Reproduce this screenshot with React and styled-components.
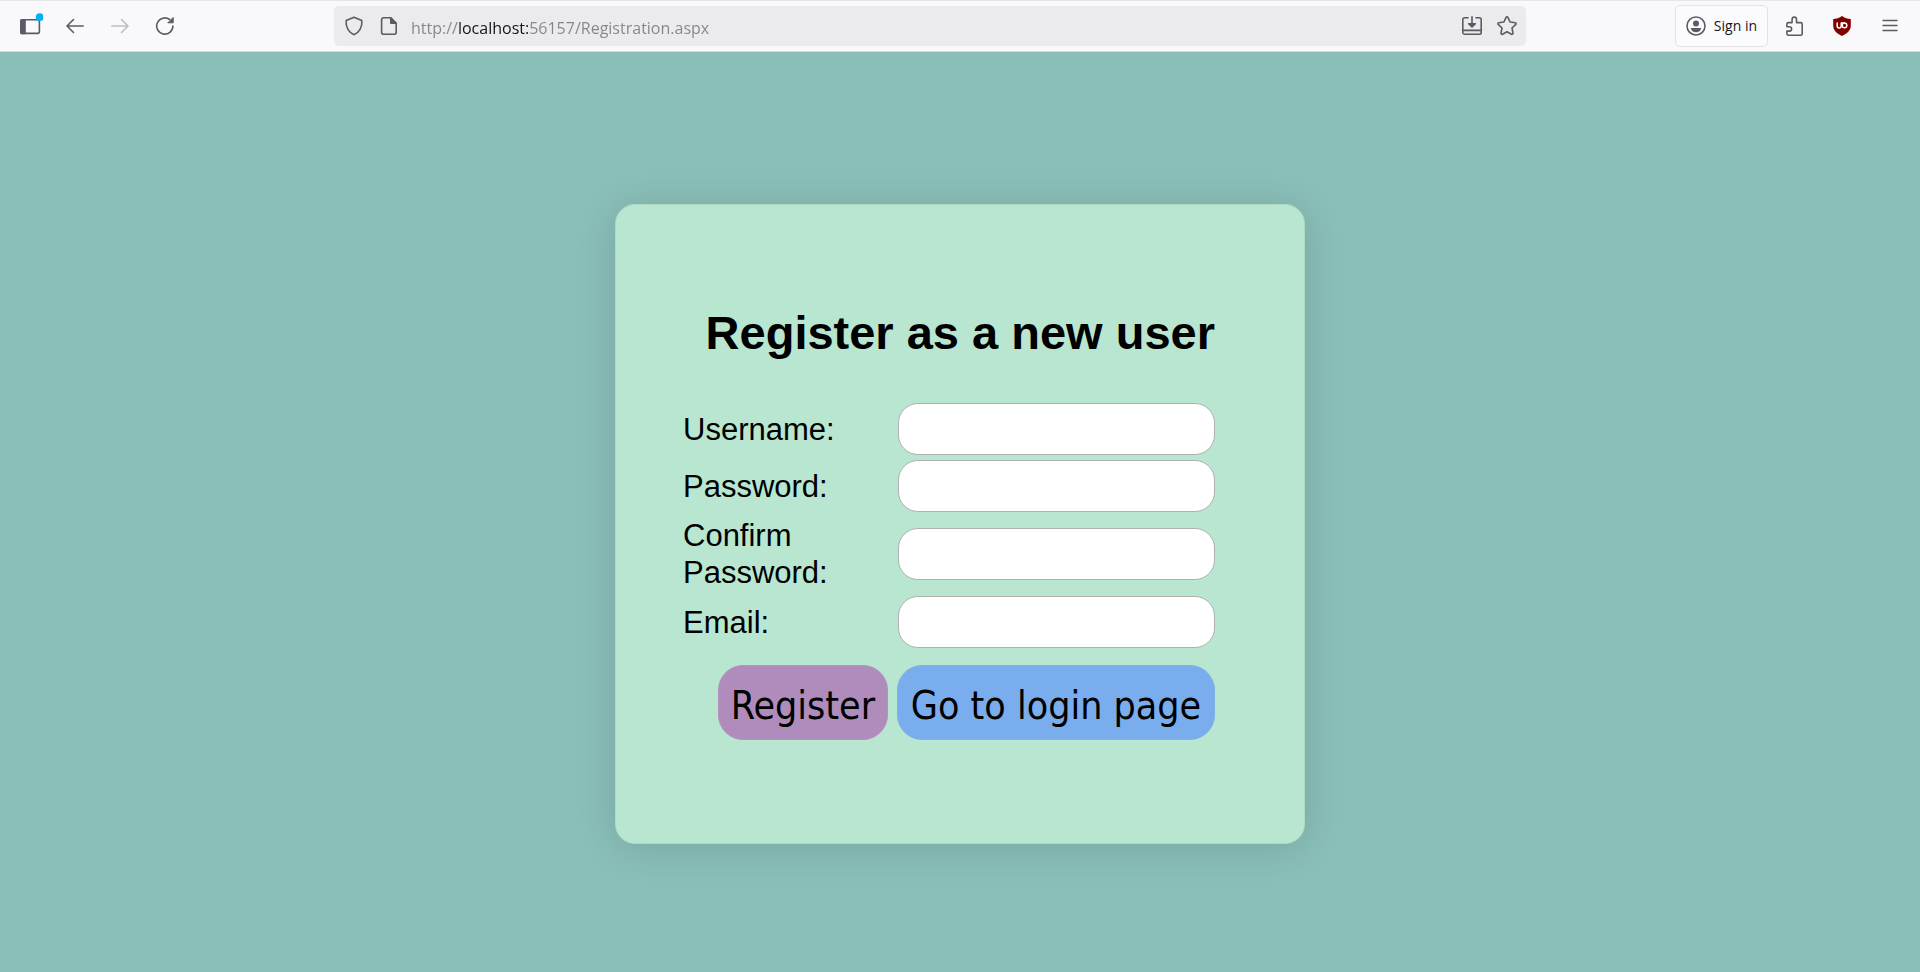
import React from 'react';
import styled, { createGlobalStyle } from 'styled-components';

const GlobalStyle = createGlobalStyle`
  *, *::before, *::after { box-sizing: border-box; }
  body {
    margin: 0;
    background: #8abeb8;
    font-family: "Liberation Sans", Arial, sans-serif;
    color: #000;
  }
`;

const Window = styled.div`
  display: flex;
  flex-direction: column;
  min-height: 100vh;
`;

const Toolbar = styled.header`
  display: flex;
  align-items: center;
  height: 52px;
  background: #f9f9fb;
  border-top: 1px solid #e6e6ea;
  border-bottom: 1px solid #d6d9dc;
  font-family: "Open Sans", "Noto Sans", sans-serif;
  color: #15141a;
`;

const NavGroup = styled.nav`
  display: flex;
  flex: none;
  width: 334px;
  padding-left: 7px;
`;

const ActionGroup = styled.div`
  display: flex;
  align-items: center;
  justify-content: flex-end;
  flex: none;
  width: 394px;
  padding-right: 6px;
`;

const IconButton = styled.button`
  display: flex;
  align-items: center;
  justify-content: center;
  flex: none;
  width: ${(p) => p.$width || 45}px;
  height: 40px;
  padding: 0;
  border: 0;
  background: none;
  color: ${(p) => (p.disabled ? '#bdbdc3' : '#5b5b66')};
`;

const AddressBar = styled.div`
  display: flex;
  align-items: center;
  flex: 1;
  min-width: 0;
  height: 40px;
  padding: 0 2px;
  border-radius: 5px;
  background: #ebebed;
`;

const AddressInput = styled.input`
  flex: 1;
  min-width: 0;
  height: 32px;
  margin-left: 5px;
  padding: 3px 0 0;
  border: 0;
  outline: 0;
  font: 16px/24px "Open Sans", "Noto Sans", sans-serif;
  color: #15141a;
  background: linear-gradient(90deg, #85858a 48px, #15141a 48px, #15141a 117px, #85858a 117px);
  background-clip: text;
  -webkit-background-clip: text;
  -webkit-text-fill-color: transparent;
`;

const SignInButton = styled.button`
  display: flex;
  align-items: center;
  gap: 8px;
  height: 42px;
  margin-right: 2px;
  padding: 0 10px;
  border: 1px solid #e3e3e7;
  border-radius: 5px;
  background: #fbfbfd;
  color: #15141a;
  font: 14px/20px "Open Sans", "Noto Sans", sans-serif;
  white-space: nowrap;

  svg { color: #5b5b66; }
`;

const Page = styled.main`
  display: flex;
  flex: 1;
  align-items: center;
  justify-content: center;
  padding: 24px 0 0;
`;

const Card = styled.form`
  width: 690px;
  max-width: 100%;
  padding: 98px 89px 103px 67px;
  border: 1px solid #aed9c5;
  border-radius: 20px;
  background: #b8e6d0;
  box-shadow: 0 4px 40px rgba(0, 0, 0, 0.12);
`;

const Title = styled.h1`
  margin: 0 0 40px;
  font-size: 47px;
  line-height: 60px;
  text-align: right;
`;

const Fields = styled.div`
  display: flex;
  flex-direction: column;
  gap: 5px;
`;

const Field = styled.div`
  display: grid;
  grid-template-columns: 208px 1fr;
  column-gap: 7px;
  align-items: center;
`;

const Label = styled.label`
  font-size: 31px;
  line-height: 37px;
`;

const TextBox = styled.input`
  width: 100%;
  height: 52px;
  padding: 0 16px;
  border: 1px solid #b0b0b0;
  border-radius: 20px;
  background: #fff;
  font: 31px/37px "Liberation Sans", Arial, sans-serif;
`;

const Actions = styled.div`
  display: flex;
  justify-content: flex-end;
  gap: 9px;
  margin-top: 17px;
`;

const ActionButton = styled.button`
  height: 75px;
  width: ${(p) => p.$width}px;
  padding: 6px 0 0;
  border: 1px solid ${(p) => p.$edge};
  border-radius: 25px;
  background: ${(p) => p.$fill};
  color: #000;
  font: 39px/48px "DejaVu Sans Condensed", "DejaVu Sans", sans-serif;
  font-stretch: condensed;
  white-space: nowrap;
`;

const Icon = ({ size = 20, children }) => (
  <svg width={size} height={size} viewBox={`0 0 ${size} ${size}`} fill="none" stroke="currentColor"
    strokeWidth="1.6" strokeLinecap="round" strokeLinejoin="round" aria-hidden="true">
    {children}
  </svg>
);

const SidebarIcon = () => (
  <Icon size={26}>
    <rect x="3.8" y="6.8" width="18.6" height="13.6" rx="2" />
    <path d="M4 7h4v13.400H4z" fill="currentColor" />
    <circle cx="22.700" cy="4.200" r="3.900" fill="#00b3f4" stroke="none" />
  </Icon>
);

const BackIcon = () => (
  <Icon><path d="M18.200 10H2M8.500 3.500 2 10l6.500 6.500" /></Icon>
);

const ForwardIcon = () => (
  <Icon><path d="M1.800 10H18M11.500 3.500 18 10l-6.500 6.500" /></Icon>
);

const ReloadIcon = () => (
  <Icon>
    <path d="M17.900 10a8.100 8.100 0 1 1-3.300-6.500" />
    <path d="M18.200 1.800v5h-5z" fill="currentColor" strokeWidth="1" />
  </Icon>
);

const ShieldIcon = () => (
  <Icon><path d="M10 1.200 17.800 4.600C18.600 11.200 15 16.600 10 18.800 5 16.600 1.400 11.200 2.200 4.600z" /></Icon>
);

const PageIcon = () => (
  <Icon>
    <path d="M4.600 1.800h7.200l5.400 5.400v9a2 2 0 0 1-2 2H4.600a2 2 0 0 1-2-2V3.800a2 2 0 0 1 2-2z" />
    <path d="M11.800 2v5.200H17z" fill="currentColor" />
  </Icon>
);

const InstallIcon = () => (
  <Icon size={22}>
    <path d="M7 2.800H3.500a1.700 1.700 0 0 0-1.700 1.700v13a1.700 1.700 0 0 0 1.700 1.700h15a1.700 1.700 0 0 0 1.700-1.700v-13a1.700 1.700 0 0 0-1.700-1.700H15M2 15.400h18M11 1.800v9" />
    <path d="M7.600 8.700h6.800L11 12z" fill="currentColor" />
  </Icon>
);

const StarIcon = () => (
  <Icon size={22}>
    <path d="M10.100 2.300a1 1 0 0 1 1.800 0l2.200 4.700 5.100.7a1 1 0 0 1 .6 1.700L16 13l1 5.200a1 1 0 0 1-1.500 1L11 16.700l-4.500 2.500a1 1 0 0 1-1.500-1l1-5.200L2.200 9.400a1 1 0 0 1 .6-1.700l5.100-.7z" />
  </Icon>
);

const AccountIcon = () => (
  <Icon>
    <circle cx="10" cy="10" r="9" />
    <circle cx="10" cy="7.400" r="3" fill="currentColor" stroke="none" />
    <path d="M4.700 12h10.600c-.5 2.700-2.700 4.300-5.300 4.300S5.200 14.700 4.700 12z" fill="currentColor" stroke="none" />
  </Icon>
);

const ExtensionsIcon = () => (
  <Icon>
    <path d="M4.300 6.600h3.800V3.300a2.200 2.200 0 0 1 4.400 0v3.300h4.200a1.500 1.500 0 0 1 1.500 1.500v9.600a1.500 1.500 0 0 1-1.500 1.500H4.400a1.500 1.500 0 0 1-1.500-1.500v-2.600h2.500a2.200 2.200 0 0 0 0-4.400H2.900V8a1.400 1.400 0 0 1 1.400-1.400z" />
  </Icon>
);

const BlockerIcon = () => (
  <Icon>
    <path d="M10 0c2.700 1.900 5.500 2.800 8.800 3v6.500c0 5-3.700 8-8.800 10.500C4.900 17.500 1.200 14.500 1.200 9.500V3C4.500 2.800 7.300 1.900 10 0z" fill="#800000" stroke="none" />
    <path d="M5.200 7v3a2 2 0 0 0 4 0V7" stroke="#fff" strokeWidth="1.500" />
    <circle cx="12.500" cy="9.400" r="2.300" stroke="#fff" strokeWidth="1.500" />
    <path d="M9.600 7h2.500" stroke="#fff" strokeWidth="1.300" />
  </Icon>
);

const MenuIcon = () => (
  <Icon><path d="M3 4.500h14M3 9.500h14M3 14.500h14" strokeWidth="1.400" /></Icon>
);

const FIELDS = [
  { id: 'username', label: 'Username:', type: 'text' },
  { id: 'password', label: 'Password:', type: 'password' },
  { id: 'confirm-password', label: 'Confirm Password:', type: 'password' },
  { id: 'email', label: 'Email:', type: 'email' },
];

export default function App() {
  return (
    <>
      <GlobalStyle />
      <Window>
        <Toolbar>
          <NavGroup aria-label="Browser navigation">
            <IconButton aria-label="Sidebar"><SidebarIcon /></IconButton>
            <IconButton aria-label="Back"><BackIcon /></IconButton>
            <IconButton aria-label="Forward" disabled><ForwardIcon /></IconButton>
            <IconButton aria-label="Reload"><ReloadIcon /></IconButton>
          </NavGroup>
          <AddressBar>
            <IconButton $width={35} aria-label="Tracking protection"><ShieldIcon /></IconButton>
            <IconButton $width={35} aria-label="Site information"><PageIcon /></IconButton>
            <AddressInput aria-label="Address" defaultValue="http://localhost:56157/Registration.aspx" spellCheck={false} />
            <IconButton $width={35} aria-label="Install page"><InstallIcon /></IconButton>
            <IconButton $width={35} aria-label="Bookmark"><StarIcon /></IconButton>
          </AddressBar>
          <ActionGroup>
            <SignInButton><AccountIcon />Sign in</SignInButton>
            <IconButton $width={48} aria-label="Extensions"><ExtensionsIcon /></IconButton>
            <IconButton $width={48} aria-label="Content blocker"><BlockerIcon /></IconButton>
            <IconButton $width={48} aria-label="Menu"><MenuIcon /></IconButton>
          </ActionGroup>
        </Toolbar>
        <Page>
          <Card onSubmit={(e) => e.preventDefault()}>
            <Title>Register as a new user</Title>
            <Fields>
              {FIELDS.map(({ id, label, type }) => (
                <Field key={id}>
                  <Label htmlFor={id}>{label}</Label>
                  <TextBox id={id} name={id} type={type} />
                </Field>
              ))}
            </Fields>
            <Actions>
              <ActionButton type="submit" $width={170} $fill="#af8cbb" $edge="#b094bd">Register</ActionButton>
              <ActionButton type="button" $width={318} $fill="#7aadee" $edge="#82b1e2">Go to login page</ActionButton>
            </Actions>
          </Card>
        </Page>
      </Window>
    </>
  );
}
